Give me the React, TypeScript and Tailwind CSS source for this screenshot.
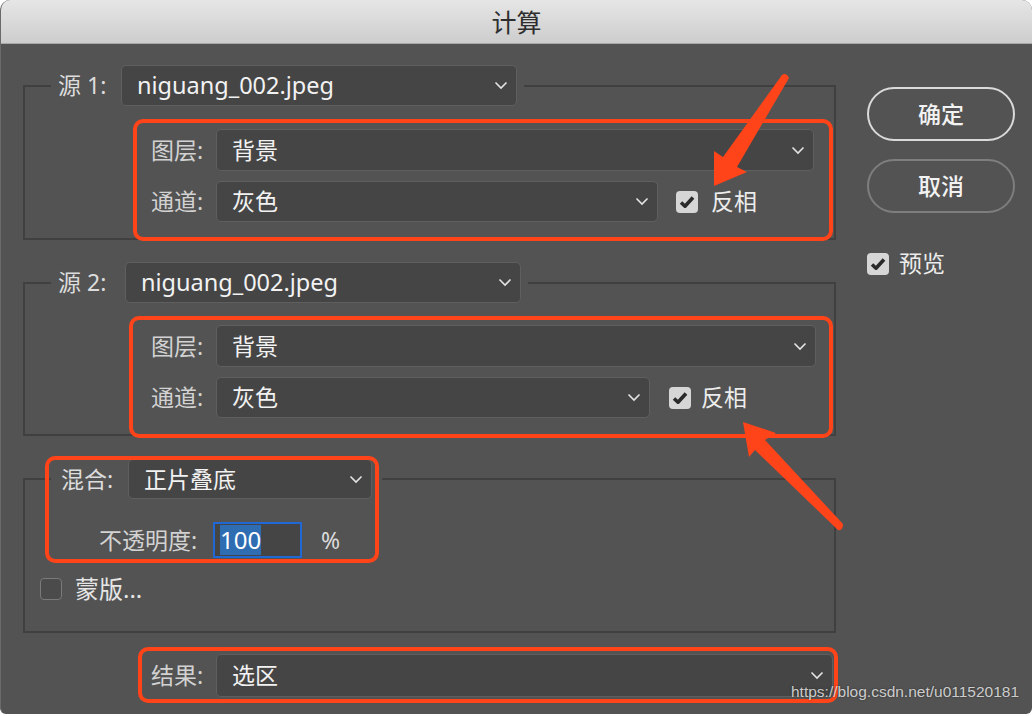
import React from "react";

const Chevron = () => (
  <svg width="14" height="9" viewBox="0 0 14 9" className="shrink-0">
    <path d="M1.5 1.5 L7 7 L12.5 1.5" fill="none" stroke="#e4e4e4" strokeWidth="1.6" />
  </svg>
);

function Select({ value, className = "" }: { value: string; className?: string }) {
  return (
    <div
      className={
        "flex items-center justify-between rounded-[5px] border-[1.5px] border-[#5f5f5f] bg-[#454545] pl-[15px] pr-[8px] text-[#f2f2f2] " +
        className
      }
    >
      <span className="leading-none">{value}</span>
      <Chevron />
    </div>
  );
}

const Checked = () => (
  <div className="flex h-[22px] w-[22px] shrink-0 items-center justify-center rounded-[4px] bg-[#d6d6d6]">
    <svg width="18" height="16" viewBox="0 0 18 16">
      <path d="M3 8.5 L7 12.2 L15 3.5" fill="none" stroke="#2a2a2a" strokeWidth="3.6" strokeLinejoin="round" />
    </svg>
  </div>
);

const Unchecked = () => (
  <div className="h-[22px] w-[22px] shrink-0 rounded-[4px] border-[1.5px] border-[#7a7a7a] bg-[#4b4b4b]" />
);

function Label({ children, className = "" }: { children: React.ReactNode; className?: string }) {
  return <span className={"shrink-0 leading-none text-[#d2d2d2] " + className}>{children}</span>;
}

export default function App() {
  return (
    <div className="h-[716px] w-[1034px] bg-white font-['Noto_Sans','Noto_Sans_CJK_SC',sans-serif] text-[23px]">
      <div className="relative h-[714px] w-[1032px] overflow-hidden rounded-t-[10px] rounded-b-[6px] border-l border-[#6a6a6a] bg-[#535353]">
        {/* title bar */}
        <div className="flex h-[44px] items-center justify-center border-b border-[#a8a8a8] bg-gradient-to-b from-[#e6e6e6] to-[#cdcdcd]">
          <span className="text-[25px] leading-none text-[#2e2e2e] font-['Noto_Sans_CJK_SC',sans-serif]">计算</span>
        </div>

        <div className="flex">
          {/* left column */}
          <div className="relative w-[840px]">
            {/* group 1 */}
            <fieldset className="ml-[22px] mt-[21px] w-[813px] border-2 border-[#404040] p-0">
              <legend className="ml-[26px] flex items-center px-[7px]">
                <Label className="w-[63px] text-[#dcdcdc]">源 1:</Label>
                <Select value="niguang_002.jpeg" className="h-[41px] w-[396px] text-[23.5px]" />
              </legend>
              <div className="mb-[-3px] ml-[108px] mt-[13px] w-[700px] rounded-[10px] border-4 border-[#ff4419] pb-[15px] pl-[14px] pr-[15px] pt-[6px]">
                <div className="flex items-center">
                  <Label className="w-[65px]">图层:</Label>
                  <Select value="背景" className="h-[42px] flex-1" />
                </div>
                <div className="mt-[10px] flex items-center">
                  <Label className="w-[65px]">通道:</Label>
                  <Select value="灰色" className="h-[41px] w-[442px]" />
                  <div className="ml-[18px] flex items-center gap-[13px]">
                    <Checked />
                    <span className="leading-none text-[#ececec]">反相</span>
                  </div>
                </div>
              </div>
            </fieldset>

            {/* group 2 */}
            <fieldset className="ml-[22px] mt-[22px] w-[813px] border-2 border-[#404040] p-0">
              <legend className="ml-[26px] flex items-center px-[7px]">
                <Label className="w-[67px] text-[#dcdcdc]">源 2:</Label>
                <Select value="niguang_002.jpeg" className="h-[41px] w-[396px] text-[23.5px]" />
              </legend>
              <div className="mb-[-4px] ml-[104px] mt-[13px] w-[704px] rounded-[10px] border-4 border-[#ff4419] pb-[16px] pl-[18px] pr-[13px] pt-[5px]">
                <div className="flex items-center">
                  <Label className="w-[65px]">图层:</Label>
                  <Select value="背景" className="h-[42px] flex-1" />
                </div>
                <div className="mt-[10px] flex items-center">
                  <Label className="w-[65px]">通道:</Label>
                  <Select value="灰色" className="h-[41px] w-[434px]" />
                  <div className="ml-[19px] flex items-center gap-[10px]">
                    <Checked />
                    <span className="leading-none text-[#ececec]">反相</span>
                  </div>
                </div>
              </div>
            </fieldset>

            {/* group 3 */}
            <fieldset className="ml-[22px] mt-[23px] w-[813px] border-2 border-[#404040] p-0 pb-[31px]">
              <legend className="ml-[26px] flex items-center px-[10px]">
                <Label className="w-[67px] text-[#dcdcdc]">混合:</Label>
                <Select value="正片叠底" className="h-[40px] w-[244px]" />
              </legend>
              <div className="ml-[74px] mt-[23px] flex items-center">
                <Label className="w-[114px]">不透明度:</Label>
                <div className="flex h-[36px] w-[89px] items-stretch border-2 border-[#1f68d6] bg-[#454545] py-[1px]">
                  <span className="ml-[5px] flex items-center bg-[#2e6db2] text-[24px] leading-none text-white">100</span>
                </div>
                <span className="ml-[19px] text-[23px] leading-none text-[#dcdcdc]">%</span>
              </div>
              <div className="ml-[15px] mt-[20px] flex h-[22px] items-center gap-[13px]">
                <Unchecked />
                <span className="text-[24px] leading-none text-[#e6e6e6]">蒙版...</span>
              </div>
            </fieldset>

            {/* result */}
            <div className="ml-[137px] mt-[14px] flex h-[56px] w-[700px] items-center rounded-[10px] border-4 border-[#ff4419] pl-[9px] pr-[1px]">
              <Label className="w-[65px]">结果:</Label>
              <Select value="选区" className="h-[43px] flex-1" />
            </div>

            {/* annotation box around blend settings */}
            <div className="pointer-events-none absolute left-[44px] top-[412px] h-[107px] w-[334px] rounded-[10px] border-4 border-[#ff4419]" />
          </div>

          {/* right column */}
          <div className="flex flex-col pl-[26px] pt-[43px]">
            <button className="flex h-[54px] w-[148px] items-center justify-center rounded-full border-2 border-[#dadada] font-medium leading-none text-[#f2f2f2]">
              确定
            </button>
            <button className="mt-[18px] flex h-[54px] w-[148px] items-center justify-center rounded-full border-2 border-[#7e7e7e] font-medium leading-none text-[#f2f2f2]">
              取消
            </button>
            <div className="mt-[39px] flex items-center gap-[10px]">
              <Checked />
              <span className="leading-none text-[#ececec]">预览</span>
            </div>
          </div>
        </div>

        {/* arrows */}
        <svg className="pointer-events-none absolute left-0 top-0" width="1032" height="714" viewBox="0 0 1032 714">
          <path
            d="M713 186 L713 151 L722 157 L781 75 Q785 72 788 78 L736 167 L746 172 Z"
            fill="#ff4419"
          />
          <path
            d="M742 422 L775 433 L764 440 L842 524 Q842 531 837 530 L754 450 L748 457 Z"
            fill="#ff4419"
          />
        </svg>

        <span className="absolute left-[790px] top-[684px] font-['Liberation_Sans',sans-serif] text-[15.5px] leading-none text-[#f4f4f4]/80 [text-shadow:0_0_2px_rgba(0,0,0,0.5)]">
          https://blog.csdn.net/u011520181
        </span>
      </div>
    </div>
  );
}
